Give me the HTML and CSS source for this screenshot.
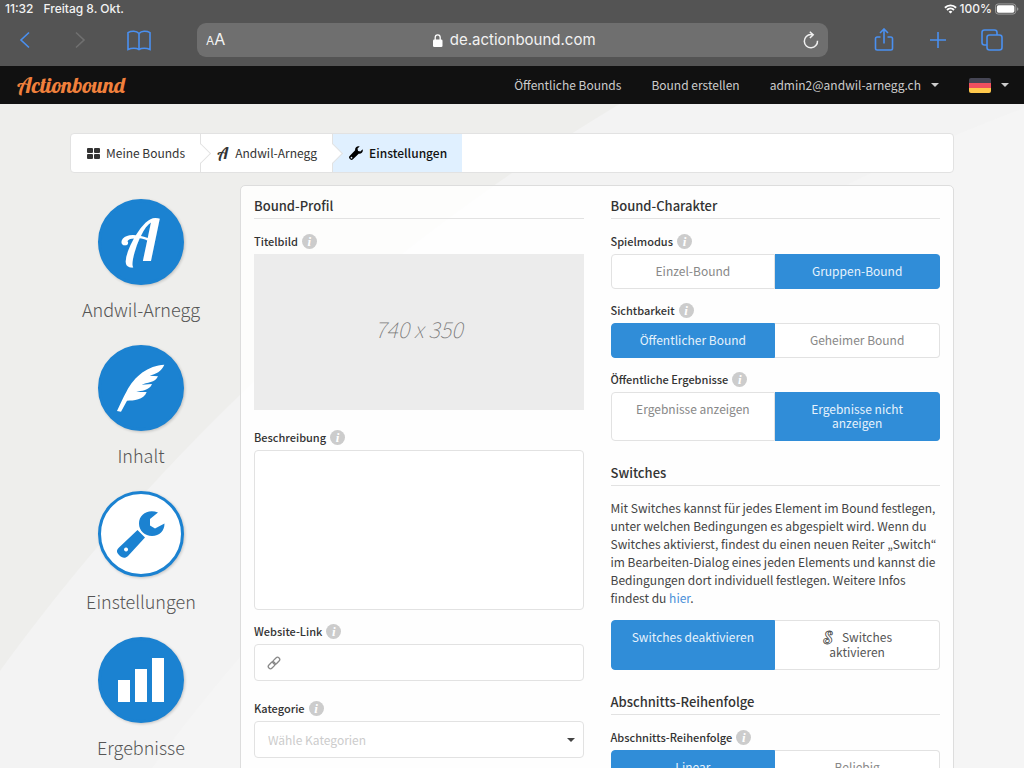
FILE: index.html
```html
<!DOCTYPE html>
<html lang="de">
<head>
    <meta charset="UTF-8">
    <meta name="viewport" content="width=device-width, initial-scale=1.0">
    <title>Einstellungen - Actionbound</title>
    <link rel="stylesheet" href="styles.css">
</head>
<body>

    <!-- Browser -->
    <header class="browser">
        <div class="status">
            <span>11:32</span>
            <span>Freitag 8. Okt.</span>
            <span class="battery">
                <svg width="13" height="10" viewBox="0 0 13 10" fill="none" stroke="#fff" stroke-width="1.9"><path d="M.9 3.7a8 8 0 0 1 11.2 0M3 6a5 5 0 0 1 7 0"/><path d="M6.5 9.6L4.6 7.7a2.7 2.7 0 0 1 3.8 0z" fill="#fff" stroke="none"/></svg>
                100%
                <svg width="24" height="12" viewBox="0 0 26 12"><rect x=".5" y=".5" width="22" height="11" rx="3" fill="none" stroke="#a2a2a2"/><rect x="2" y="2" width="19" height="8" rx="1.8" fill="#fff"/><path d="M24 4v4q1.3-.5 1.3-2T24 4z" fill="#a2a2a2"/></svg>
            </span>
        </div>
        <div class="toolbar">
            <button class="tool" aria-label="Zurück"><svg width="12" height="18" viewBox="0 0 12 18"><path d="M10 1.500L2 9l8 7.500"/></svg></button>
            <button class="tool off" aria-label="Vorwärts"><svg width="12" height="18" viewBox="0 0 12 18"><path d="M2 1.500L10 9l-8 7.500"/></svg></button>
            <button class="tool book" aria-label="Lesezeichen"><svg width="24" height="21" viewBox="0 0 24 21"><path d="M12 3.500C9.500.700 4.500.600 1 2.600V19.500c3.500-1.700 8.500-1.700 11 0 2.500-1.700 7.500-1.700 11 0V2.600C19.500.600 14.500.700 12 3.500zM12 3.500v16"/></svg></button>
            <div class="address">
                <button class="text-size" aria-label="Textgröße"><small>A</small>A</button>
                <span class="url">
                    <svg width="10" height="13" viewBox="0 0 10 13"><rect y="5.500" width="9.500" height="7.500" rx="1.300" fill="#fff"/><path d="M2.200 6V3.500a2.500 2.700 0 0 1 5 0V6" fill="none" stroke="#fff" stroke-width="1.300"/></svg>
                    de.actionbound.com
                </span>
                <button class="reload" aria-label="Neu laden"><svg width="16" height="18" viewBox="0 0 16 18" fill="none" stroke="#f0f0f0" stroke-width="1.500"><path d="M14.500 9.700A6.600 6.600 0 1 1 8 3.600h2M6.800.700L10.200 3.700 6.900 7"/></svg></button>
            </div>
            <button class="tool" aria-label="Teilen"><svg width="20" height="24" viewBox="0 0 20 24"><path d="M6.500 9H3.200Q1.500 9 1.500 10.700v9.600Q1.500 22 3.200 22h13.600q1.700 0 1.700-1.700v-9.600Q18.500 9 16.800 9h-3.300M10 15.500V1.500M6 5l4-4 4 4"/></svg></button>
            <button class="tool" aria-label="Neuer Tab"><svg width="18" height="18" viewBox="0 0 18 18"><path d="M9 1v16M1 9h16"/></svg></button>
            <button class="tool" aria-label="Tabs"><svg width="22" height="22" viewBox="0 0 22 22"><rect x="6" y="6" width="15" height="15" rx="2.500"/><path d="M6 16H3.500Q1 16 1 13.500v-10Q1 1 3.500 1h10Q16 1 16 3.500V6"/></svg></button>
        </div>
    </header>

    <!-- Navigation -->
    <nav class="navbar">
        <a class="brand" href="#">Actionbound</a>
        <a href="#">Öffentliche Bounds</a>
        <a href="#">Bound erstellen</a>
        <a href="#" class="account">admin2@andwil-arnegg.ch <span class="caret"></span></a>
        <a href="#" class="language" aria-label="Deutsch"><span class="flag"></span><span class="caret"></span></a>
    </nav>

    <main class="page">
        <div class="breadcrumb">
            <a href="#">
                <svg width="13" height="11" viewBox="0 0 13 11" fill="#333"><rect width="6" height="5" rx="1"/><rect x="7" width="6" height="5" rx="1"/><rect y="6" width="6" height="5" rx="1"/><rect x="7" y="6" width="6" height="5" rx="1"/></svg>
                Meine Bounds
            </a>
            <a href="#">
                <svg class="script-a" width="12" height="14" viewBox="0 0 40 48"><text x="0" y="45">A</text></svg>
                Andwil-Arnegg
            </a>
            <a href="#" class="active">
                <svg width="14" height="14" viewBox="0 0 13 13"><path d="M12.600 3.100L10.600 5.100 8.400 4.600 7.900 2.400 9.900.400C7.600-.500 5.300 1.300 5.700 4L.600 9.200a1.900 1.900 0 0 0 0 2.600l.500.500a1.800 1.800 0 0 0 2.600 0L9 7.200c2.700.400 4.500-1.900 3.600-4.100zM2.300 11.600a.8.8 0 1 1 0-1.600.8.8 0 0 1 0 1.600z"/></svg>
                Einstellungen
            </a>
        </div>

        <div class="layout">
            <!-- Seitenmenü -->
            <aside class="menu">
                <a href="#">
                    <span class="circle"><svg class="script-a" width="40" height="48" viewBox="0 0 40 48"><text x="0" y="43">A</text></svg></span>
                    Andwil-Arnegg
                </a>
                <a href="#">
                    <span class="circle"><svg width="52" height="52" viewBox="12 18 156 156" fill="#fff"><path d="M160 26C112 28 70 60 47 106 36 126 26 148 18 165L30 167 48 134C68 134 98 132 107 108L76 108C90 104 116 104 123 84L92 86C106 80 134 80 141 61L116 59C134 54 152 46 160 26z"/></svg></span>
                    Inhalt
                </a>
                <a href="#" class="active">
                    <span class="circle"><svg width="48" height="48" viewBox="0 0 48 48" fill="#1b82d1"><path d="M41 2.500C31-1.500 22 4.500 22 13.500 22 21 28 26 35 26c7.500 0 12.500-5 12.500-12.500L38 18.500 33 15.500V9z"/><path d="M20.500 20l7.500 7.500L11 46c-3 3-6 2-9-1-3-3-2.500-5 0-7.500zM9 37.500a2 2 0 1 0 .1 0z" fill-rule="evenodd"/></svg></span>
                    Einstellungen
                </a>
                <a href="#">
                    <span class="circle"><svg width="46" height="46" viewBox="0 0 46 46" fill="#fff"><rect y="23" width="12" height="22"/><rect x="17" y="12" width="12" height="33"/><rect x="34" y="1" width="12" height="44"/></svg></span>
                    Ergebnisse
                </a>
            </aside>

            <form class="panel">
                <section>
                    <h2>Bound-Profil</h2>
                    <div class="field wide">
                        <div class="label" id="cover-label">Titelbild <span class="info">i</span></div>
                        <div class="cover" aria-labelledby="cover-label">740 x 350</div>
                    </div>
                    <div class="field">
                        <label for="description">Beschreibung <span class="info">i</span></label>
                        <textarea id="description"></textarea>
                    </div>
                    <div class="field wide">
                        <label for="website">Website-Link <span class="info">i</span></label>
                        <div class="input">
                            <svg width="14" height="14" viewBox="0 0 14 14" fill="none" stroke="#888" stroke-width="1.300"><rect x="-3.900" y="-2.200" width="7.800" height="4.400" rx="2.200" transform="translate(9.300 4.700) rotate(-45)"/><rect x="-3.900" y="-2.200" width="7.800" height="4.400" rx="2.200" transform="translate(4.700 9.300) rotate(-45)"/></svg>
                            <input type="text" id="website">
                        </div>
                    </div>
                    <div class="field">
                        <label for="category">Kategorie <span class="info">i</span></label>
                        <div class="input">
                            <select id="category">
                                <option>Wähle Kategorien</option>
                            </select>
                            <span class="caret"></span>
                        </div>
                    </div>
                </section>

                <section>
                    <h2>Bound-Charakter</h2>
                    <div class="field">
                        <div class="label" id="mode">Spielmodus <span class="info">i</span></div>
                        <div class="buttons" role="group" aria-labelledby="mode">
                            <button type="button">Einzel-Bound</button>
                            <button type="button" class="on">Gruppen-Bound</button>
                        </div>
                    </div>
                    <div class="field">
                        <div class="label" id="visibility">Sichtbarkeit <span class="info">i</span></div>
                        <div class="buttons" role="group" aria-labelledby="visibility">
                            <button type="button" class="on">Öffentlicher Bound</button>
                            <button type="button">Geheimer Bound</button>
                        </div>
                    </div>
                    <div class="field">
                        <div class="label" id="results">Öffentliche Ergebnisse <span class="info">i</span></div>
                        <div class="buttons" role="group" aria-labelledby="results">
                            <button type="button">Ergebnisse anzeigen</button>
                            <button type="button" class="on">Ergebnisse nicht anzeigen</button>
                        </div>
                    </div>

                    <h2 id="switches">Switches</h2>
                    <p>Mit Switches kannst für jedes Element im Bound festlegen, unter welchen Bedingungen es abgespielt wird. Wenn du Switches aktivierst, findest du einen neuen Reiter „Switch“ im Bearbeiten-Dialog eines jeden Elements und kannst die Bedingungen dort individuell festlegen. Weitere Infos findest du <a href="#">hier</a>.</p>
                    <div class="field">
                        <div class="buttons" role="group" aria-labelledby="switches">
                            <button type="button" class="on">Switches deaktivieren</button>
                            <button type="button" class="dark"><svg class="switch" width="13" height="14" viewBox="0 0 13 14"><text x="1" y="13">S</text></svg> Switches aktivieren</button>
                        </div>
                    </div>

                    <h2>Abschnitts-Reihenfolge</h2>
                    <div class="field">
                        <div class="label" id="order">Abschnitts-Reihenfolge <span class="info">i</span></div>
                        <div class="buttons" role="group" aria-labelledby="order">
                            <button type="button" class="on">Linear</button>
                            <button type="button">Beliebig</button>
                        </div>
                    </div>
                </section>
            </form>
        </div>
    </main>

</body>
</html>
```
FILE: styles.css
```css
* {
    box-sizing: border-box;
}
body {
    margin: 0;
    height: 100vh;
    display: flex;
    flex-direction: column;
    overflow: hidden;
    font-family: "Source Sans Pro", "Noto Sans CJK KR", sans-serif;
    font-size: 12px;
    line-height: 18px;
    color: #444;
}
a {
    color: inherit;
    text-decoration: none;
}
button, input, select, textarea {
    font: inherit;
    color: inherit;
}

/* Browser */
.browser {
    flex: none;
    height: 66px;
    background-color: #545454;
    color: #f2f2f2;
    font-family: Inter, sans-serif;
}
.status {
    display: flex;
    gap: 10px;
    padding: 0 5px;
    font-size: 12px;
    font-weight: 500;
}
.battery {
    margin-left: auto;
    display: flex;
    align-items: center;
    gap: 3px;
}
.toolbar {
    display: flex;
    align-items: center;
    height: 44px;
    padding: 0 5px;
}
.toolbar button {
    border: none;
    padding: 0;
    background: none;
    cursor: pointer;
}
.tool {
    width: 54px;
    height: 34px;
    display: flex;
    align-items: center;
    justify-content: center;
}
.tool:first-child {
    width: 40px;
    margin-right: 8px;
}
.tool.book {
    width: 64px;
}
.tool svg {
    fill: none;
    stroke: #4a90f0;
    stroke-width: 1.6;
}
.tool.off svg {
    stroke: #707070;
}
.address {
    flex: 1;
    height: 34px;
    margin: 0 29px 0 26px;
    padding: 0 9px;
    display: flex;
    align-items: center;
    justify-content: space-between;
    border-radius: 9px;
    background-color: #6f6f6f;
}
.address .text-size {
    font-size: 16px;
}
.text-size small {
    font-size: 12px;
}
.url {
    display: flex;
    align-items: center;
    gap: 7px;
    font-size: 15px;
}
.reload svg {
    display: block;
}

/* Navigation */
.navbar {
    flex: none;
    height: 38px;
    display: flex;
    align-items: center;
    gap: 30px;
    padding: 0 15px 0 17px;
    background-color: #111;
    color: #ccc;
}
.brand {
    margin-right: auto;
    font-family: Lobster, "Liberation Serif", serif;
    font-size: 22px;
    color: #f0803c;
}
.caret {
    display: inline-block;
    border: 4px solid transparent;
    border-top-color: currentColor;
    border-bottom: none;
}
.account, .language {
    display: flex;
    align-items: center;
    gap: 10px;
}
.flag {
    width: 22px;
    height: 15px;
    border-radius: 2px;
    background: linear-gradient(#464655 33%, #f0505f 33%, #f0505f 66%, #ffc84b 66%);
}

/* Seite */
.page {
    flex: 1;
    min-height: 0;
    overflow-y: auto;
    scrollbar-width: none;
    padding: 29px 70px 0;
    background: radial-gradient(circle at 1699px 1802px, #f5f5f5 1920px, #f3f3f3 1921px, #f3f3f3 2100px, #eeeeec 2101px);
}
.breadcrumb {
    display: flex;
    height: 40px;
    margin-bottom: 12px;
    border: 1px solid #e2e2e2;
    border-radius: 4px;
    background-color: #fff;
    overflow: hidden;
}
.breadcrumb a {
    position: relative;
    display: flex;
    align-items: center;
    gap: 6px;
    padding: 0 15px 0 16px;
    border-right: 1px solid #e2e2e2;
    color: #333;
}
.breadcrumb .active {
    border-right: none;
    background-color: #e0f0ff;
    font-weight: 500;
    color: #111;
}
/* Pfeil zwischen den Einträgen */
.breadcrumb a:not(.active)::after {
    content: "";
    position: absolute;
    z-index: 1;
    top: 12px;
    right: -8px;
    width: 14px;
    height: 14px;
    border: 1px solid #e2e2e2;
    border-left: none;
    border-bottom: none;
    background: linear-gradient(45deg, transparent 50%, #fff 50%);
    transform: rotate(45deg);
}
.script-a {
    overflow: visible;
    fill: #333;
}
.script-a text {
    font-family: Lobster, "Liberation Serif", serif;
    font-size: 56px;
}
.layout {
    display: grid;
    grid-template-columns: 142px 1fr;
    gap: 28px;
}
.menu {
    padding-top: 14px;
}
.menu a {
    display: flex;
    flex-direction: column;
    align-items: center;
    height: 146px;
    font-size: 18px;
    font-weight: 200;
    line-height: 28px;
    white-space: nowrap;
    color: #555;
}
.circle {
    flex: none;
    display: flex;
    align-items: center;
    justify-content: center;
    width: 86px;
    height: 86px;
    margin-bottom: 10px;
    border: 3px solid #1b82d1;
    border-radius: 50%;
    background-color: #1b82d1;
    box-shadow: 1px 1px 3px rgba(0, 0, 0, 0.2);
}
.circle .script-a {
    fill: #fff;
}
.active .circle {
    background-color: #fff;
}

/* Formular */
.panel {
    display: grid;
    grid-template-columns: 1fr 1fr;
    gap: 27px;
    padding: 11px 13px 40px;
    border: 1px solid #ddd;
    border-radius: 5px;
    background-color: rgba(255, 255, 255, 0.85);
}
h2 {
    margin: 23px 0 13px;
    padding-bottom: 3px;
    border-bottom: 1px solid #e2e2e2;
    font-size: 13px;
    font-weight: 500;
    line-height: 18px;
    color: #333;
}
h2:first-child {
    margin-top: 0;
}
.field {
    margin-bottom: 12px;
}
.field.wide {
    margin-bottom: 18px;
}
label, .label {
    display: flex;
    align-items: center;
    gap: 4px;
    margin-bottom: 4px;
    font-size: 11px;
    font-weight: 500;
    color: #333;
}
.info {
    width: 15px;
    height: 15px;
    border-radius: 50%;
    background-color: #ccc;
    font-family: "Liberation Serif", serif;
    font-size: 13px;
    font-weight: bold;
    font-style: italic;
    line-height: 15px;
    text-align: center;
    color: #fff;
}
.cover {
    display: flex;
    align-items: center;
    justify-content: center;
    height: 156px;
    padding-bottom: 8px;
    background-color: #ececec;
    font-size: 22px;
    font-weight: 100;
    font-style: italic;
    color: #777;
}
textarea, .input {
    display: flex;
    align-items: center;
    width: 100%;
    height: 37px;
    border: 1px solid #e2e2e2;
    border-radius: 4px;
    background-color: #fff;
}
textarea {
    height: 160px;
    padding: 10px;
    resize: none;
}
.input {
    padding: 0 8px 0 12px;
}
.input input, .input select {
    flex: 1;
    min-width: 0;
    border: none;
    outline: none;
    appearance: none;
    background: none;
}
.input select {
    padding: 0 1px;
    color: #ccc;
}
p {
    margin: 0 0 13px;
}
p a {
    color: #4a90d9;
}
.buttons {
    display: grid;
    grid-template-columns: 1fr 1fr;
}
.buttons button {
    display: flex;
    justify-content: center;
    min-height: 35px;
    padding: 9px 18px 10px;
    border: 1px solid #e2e2e2;
    border-radius: 4px 0 0 4px;
    background-color: #fff;
    line-height: 14px;
    color: #888;
    cursor: pointer;
}
.buttons button:last-child {
    border-left: none;
    border-radius: 0 4px 4px 0;
}
.buttons .on {
    border-color: #308dd8;
    background-color: #308dd8;
    color: #e6f2fc;
}
.buttons .dark {
    display: block;
    color: #555;
}
.switch {
    margin-right: 4px;
    vertical-align: -3px;
    overflow: visible;
    fill: #fff;
    stroke: #444;
    stroke-width: 0.8;
}
.switch text {
    font-family: Lobster, "Liberation Serif", serif;
    font-size: 17px;
}
```
